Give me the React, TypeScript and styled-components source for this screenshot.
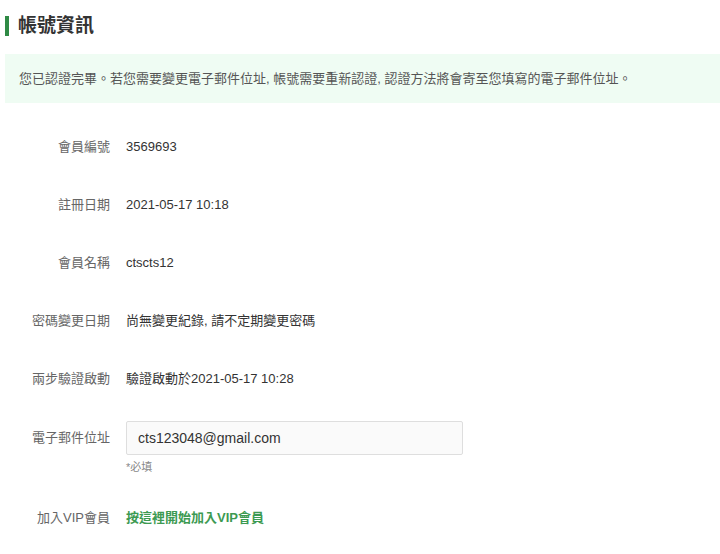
import styled, { createGlobalStyle } from 'styled-components'

const GlobalStyle = createGlobalStyle`
  body {
    margin: 0;
    background: #ffffff;
    font-family: "Liberation Sans", "Noto Sans CJK TC", sans-serif;
    color: #333;
  }
`

const Page = styled.div`
  padding: 16px 0 0 5px;
`

const Title = styled.h2`
  margin: 0;
  padding-left: 9px;
  border-left: 4px solid #2f8a45;
  font-size: 19px;
  line-height: 20px;
  font-weight: bold;
  color: #333;
`

const Notice = styled.div`
  margin-top: 18px;
  height: 49px;
  padding: 0 14px;
  background-color: #effcf3;
  font-size: 13px;
  line-height: 50px;
  color: #555;
  white-space: nowrap;
`

const Form = styled.div`
  margin-top: 15px;
  display: flex;
  flex-direction: column;
`

const Row = styled.div<{ $compact?: boolean }>`
  display: grid;
  grid-template-columns: 105px 1fr;
  column-gap: 16px;
  align-items: start;
  padding: ${({ $compact }) => ($compact ? '13px 0 15px' : '19px 0')};
`

const Label = styled.div<{ $tall?: boolean }>`
  text-align: right;
  font-size: 13px;
  line-height: ${({ $tall }) => ($tall ? '34px' : '20px')};
  color: #666;
`

const Value = styled.div`
  font-size: 13px;
  line-height: 20px;
  color: #333;
`

const Field = styled.div`
  display: flex;
  flex-direction: column;
  gap: 5px;
`

const Input = styled.input`
  box-sizing: border-box;
  width: 337px;
  height: 34px;
  padding: 0 11px;
  border: 1px solid #dedede;
  border-radius: 2px;
  background-color: #fafafa;
  font-family: inherit;
  font-size: 14px;
  color: #333;
  outline: none;
`

const Hint = styled.div`
  font-size: 11px;
  line-height: 14px;
  color: #888;
`

const Link = styled.a`
  font-size: 13px;
  line-height: 20px;
  font-weight: 600;
  color: #3d9a52;
  text-decoration: none;
  cursor: pointer;
`

const rows = [
  { label: '會員編號', value: '3569693' },
  { label: '註冊日期', value: '2021-05-17 10:18' },
  { label: '會員名稱', value: 'ctscts12' },
  { label: '密碼變更日期', value: '尚無變更紀錄, 請不定期變更密碼' },
  { label: '兩步驗證啟動', value: '驗證啟動於2021-05-17 10:28' },
]

export default function App() {
  return (
    <>
      <GlobalStyle />
      <Page>
        <Title>帳號資訊</Title>
        <Notice>
          您已認證完畢。若您需要變更電子郵件位址, 帳號需要重新認證, 認證方法將會寄至您填寫的電子郵件位址。
        </Notice>
        <Form>
          {rows.map((r) => (
            <Row key={r.label}>
              <Label>{r.label}</Label>
              <Value>{r.value}</Value>
            </Row>
          ))}
          <Row $compact>
            <Label $tall>電子郵件位址</Label>
            <Field>
              <Input defaultValue="cts123048@gmail.com" />
              <Hint>*必填</Hint>
            </Field>
          </Row>
          <Row>
            <Label>加入VIP會員</Label>
            <Value>
              <Link>按這裡開始加入VIP會員</Link>
            </Value>
          </Row>
        </Form>
      </Page>
    </>
  )
}
